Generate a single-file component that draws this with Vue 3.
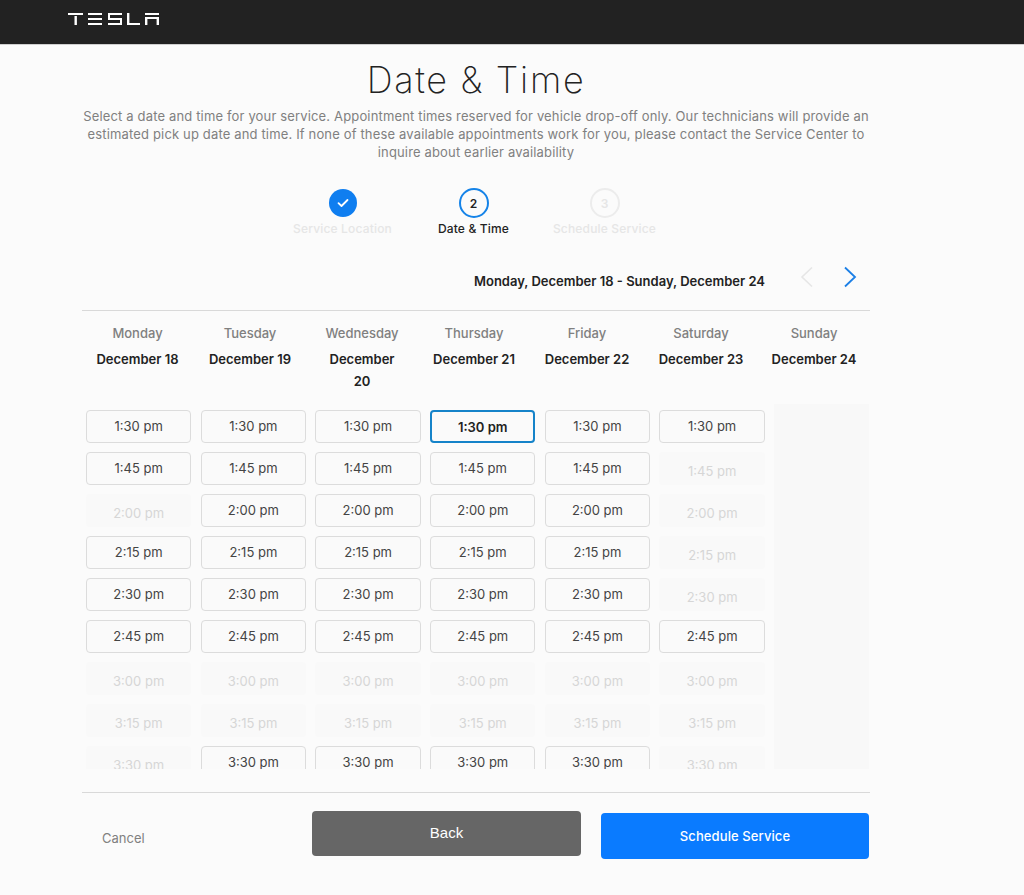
<script setup>
const days = [
  { name: 'Monday', date: 'December 18' },
  { name: 'Tuesday', date: 'December 19' },
  { name: 'Wednesday', date: 'December\n20' },
  { name: 'Thursday', date: 'December 21' },
  { name: 'Friday', date: 'December 22' },
  { name: 'Saturday', date: 'December 23' },
  { name: 'Sunday', date: 'December 24' },
]
const times = ['1:30 pm', '1:45 pm', '2:00 pm', '2:15 pm', '2:30 pm', '2:45 pm', '3:00 pm', '3:15 pm', '3:30 pm']
const open = [
  [1, 1, 0, 1, 1, 1, 0, 0, 0],
  [1, 1, 1, 1, 1, 1, 0, 0, 1],
  [1, 1, 1, 1, 1, 1, 0, 0, 1],
  [1, 1, 1, 1, 1, 1, 0, 0, 1],
  [1, 1, 1, 1, 1, 1, 0, 0, 1],
  [1, 0, 0, 0, 0, 1, 0, 0, 0],
]
</script>

<template>
  <div class="page">
    <header class="topbar">
      <svg class="logo" width="92" height="14" viewBox="0 0 92 14" fill="#fff" role="img" aria-label="Tesla">
        <rect x="0" y="1" width="15" height="2" />
        <rect x="6.5" y="4" width="2.4" height="9" />
        <rect x="20" y="1" width="14" height="2" />
        <rect x="20" y="6" width="14" height="2" />
        <rect x="20" y="11" width="14" height="2" />
        <path d="M40 1h14v2H40zM40 3h2v3h-2zM40 6h14v2H40zM52 8h2v3h-2zM40 11h14v2H40z" />
        <path d="M59 1h2.4v10H72v2H59z" />
        <path d="M77 1h14v2H77zM77 5h14v8h-2.4V7H79.4v6H77z" />
      </svg>
    </header>

    <main class="content">
      <h1 class="title">Date &amp; Time</h1>
      <p class="intro">
        <span>Select a date and time for your service. Appointment times reserved for vehicle drop-off only. Our technicians will provide an</span>
        <span>estimated pick up date and time. If none of these available appointments work for you, please contact the Service Center to</span>
        <span>inquire about earlier availability</span>
      </p>

      <ol class="steps">
        <li class="step done">
          <span class="circle">
            <svg width="12" height="10" viewBox="0 0 12 10" fill="none" stroke="#fff" stroke-width="1.8" stroke-linecap="round" stroke-linejoin="round"><path d="M1.5 5.2 4.5 8l6-6" /></svg>
          </span>
          <span class="label">Service Location</span>
        </li>
        <li class="step active">
          <span class="circle">2</span>
          <span class="label">Date &amp; Time</span>
        </li>
        <li class="step todo">
          <span class="circle">3</span>
          <span class="label">Schedule Service</span>
        </li>
      </ol>

      <div class="week-nav">
        <span class="range">Monday, December 18 - Sunday, December 24</span>
        <svg class="chev" width="14" height="22" viewBox="0 0 14 22" fill="none" stroke="#e6e6e6" stroke-width="1.6"><path d="M12 1.5 2 11l10 9.5" /></svg>
        <svg class="chev" width="14" height="22" viewBox="0 0 14 22" fill="none" stroke="#1b7fe6" stroke-width="1.8"><path d="M2 1.5 12 11 2 20.5" /></svg>
      </div>

      <div class="day-heads">
        <div v-for="d in days" :key="d.name" class="day-head">
          <div class="day-name">{{ d.name }}</div>
          <div class="day-date">{{ d.date }}</div>
        </div>
      </div>

      <div class="slots">
        <div v-for="(col, c) in open" :key="c" class="slot-col">
          <button
            v-for="(isOpen, r) in col"
            :key="r"
            type="button"
            class="slot"
            :class="{ off: !isOpen, picked: c === 3 && r === 0 }"
          >{{ times[r] }}</button>
        </div>
        <div class="closed-day"></div>
      </div>

      <footer class="actions">
        <a class="cancel">Cancel</a>
        <button type="button" class="back">Back</button>
        <button type="button" class="schedule">Schedule Service</button>
      </footer>
    </main>
  </div>
</template>

<style>
html, body { margin: 0; background: #fbfbfb; }
</style>

<style scoped>
.page {
  height: 895px;
  overflow: hidden;
  background: #fbfbfb;
  font-family: Inter, "Liberation Sans", sans-serif;
}
.topbar {
  height: 45px;
  background: #222;
  border-bottom: 1px solid #cfcfcf;
  padding: 12px 0 0 68px;
  box-sizing: border-box;
  display: flex;
  align-items: flex-start;
}
.content {
  width: 788px;
  margin-left: 82px;
}
.title {
  margin: 0;
  padding-top: 13px;
  height: 49px;
  font-size: 36px;
  line-height: 44px;
  font-weight: 200;
  letter-spacing: 1.7px;
  text-align: center;
  color: #222;
}
.intro {
  margin: 0;
  height: 54px;
  font-size: 13px;
  line-height: 18px;
  letter-spacing: 0.155px;
  color: #808080;
  text-align: center;
}
.intro span { display: block; white-space: nowrap; }
.steps {
  list-style: none;
  margin: 0;
  padding: 27px 0 0 195px;
  display: flex;
  height: 65px;
}
.step {
  width: 131px;
  display: flex;
  flex-direction: column;
  align-items: center;
}
.circle {
  width: 30px;
  height: 30px;
  box-sizing: border-box;
  border-radius: 50%;
  display: flex;
  align-items: center;
  justify-content: center;
  font-size: 12px;
  font-weight: 600;
}
.label {
  margin-top: 3px;
  font-size: 12px;
  line-height: 16px;
  font-weight: 500;
  letter-spacing: 0.17px;
  white-space: nowrap;
}
.done .circle { width: 28px; height: 28px; margin: 1px 0; background: #0f7ef0; }
.done .label, .todo .label { color: #e6e6e6; }
.active .circle { border: 2px solid #1583e8; color: #222; }
.active .label { color: #222; }
.todo .circle { border: 2px solid #ececec; color: #e6e6e6; }
.week-nav {
  display: flex;
  align-items: center;
  justify-content: flex-end;
  height: 58px;
  box-sizing: border-box;
  padding: 0 13px 1px 0;
  border-bottom: 1px solid #d9d9d9;
}
.range { font-size: 13px; font-weight: 600; color: #222; margin-right: 35px; }
.chev { margin-bottom: 8px; }
.chev + .chev { margin-left: 29px; }
.day-heads {
  display: grid;
  grid-template-columns: 111px 114px 110px 114px 112px 116px 110px;
  height: 93px;
}
.day-head { text-align: center; padding-top: 13px; }
.day-name { font-size: 13px; line-height: 18px; font-weight: 500; color: #808080; }
.day-date {
  margin-top: 6px;
  font-size: 13px;
  line-height: 22px;
  font-weight: 600;
  color: #222;
  white-space: pre-line;
}
.slots {
  height: 365px;
  overflow: hidden;
  display: grid;
  grid-template-columns: repeat(6, 105.4px) 95px;
  column-gap: 9.3px;
  padding-left: 4px;
  box-sizing: border-box;
}
.slot-col {
  display: flex;
  flex-direction: column;
  gap: 9px;
  padding-top: 6px;
}
.slot {
  flex: none;
  height: 33px;
  padding: 0 0 2px;
  border: 1px solid #dcdcdc;
  border-radius: 4px;
  background: #fafafa;
  font-family: inherit;
  font-size: 13px;
  color: #444;
}
.slot.off {
  border-color: #f9f9f9;
  background: #f9f9f9;
  color: #d6d6d6;
  padding: 4px 0 0;
}
.slot.picked {
  border: 2px solid #1583c9;
  font-weight: 600;
  color: #222;
  padding: 0;
}
.closed-day { background: #f8f8f8; }
.actions {
  margin-top: 23px;
  height: 80px;
  border-top: 1px solid #d9d9d9;
  display: flex;
  align-items: flex-start;
}
.cancel {
  margin: 37px 0 0 20px;
  width: 210px;
  font-size: 13px;
  line-height: 16px;
  color: #808080;
}
.back, .schedule {
  border: 0;
  border-radius: 4px;
  font-family: inherit;
  color: #fff;
  padding: 0;
}
.back {
  width: 269px;
  height: 45px;
  margin-top: 18px;
  padding-bottom: 2px;
  background: #666;
  font-family: "Liberation Sans", sans-serif;
  font-size: 15px;
}
.schedule {
  width: 268px;
  height: 46px;
  margin: 20px 0 0 20px;
  background: #0a7bff;
  font-size: 13px;
  font-weight: 500;
  letter-spacing: 0.1px;
}
</style>
